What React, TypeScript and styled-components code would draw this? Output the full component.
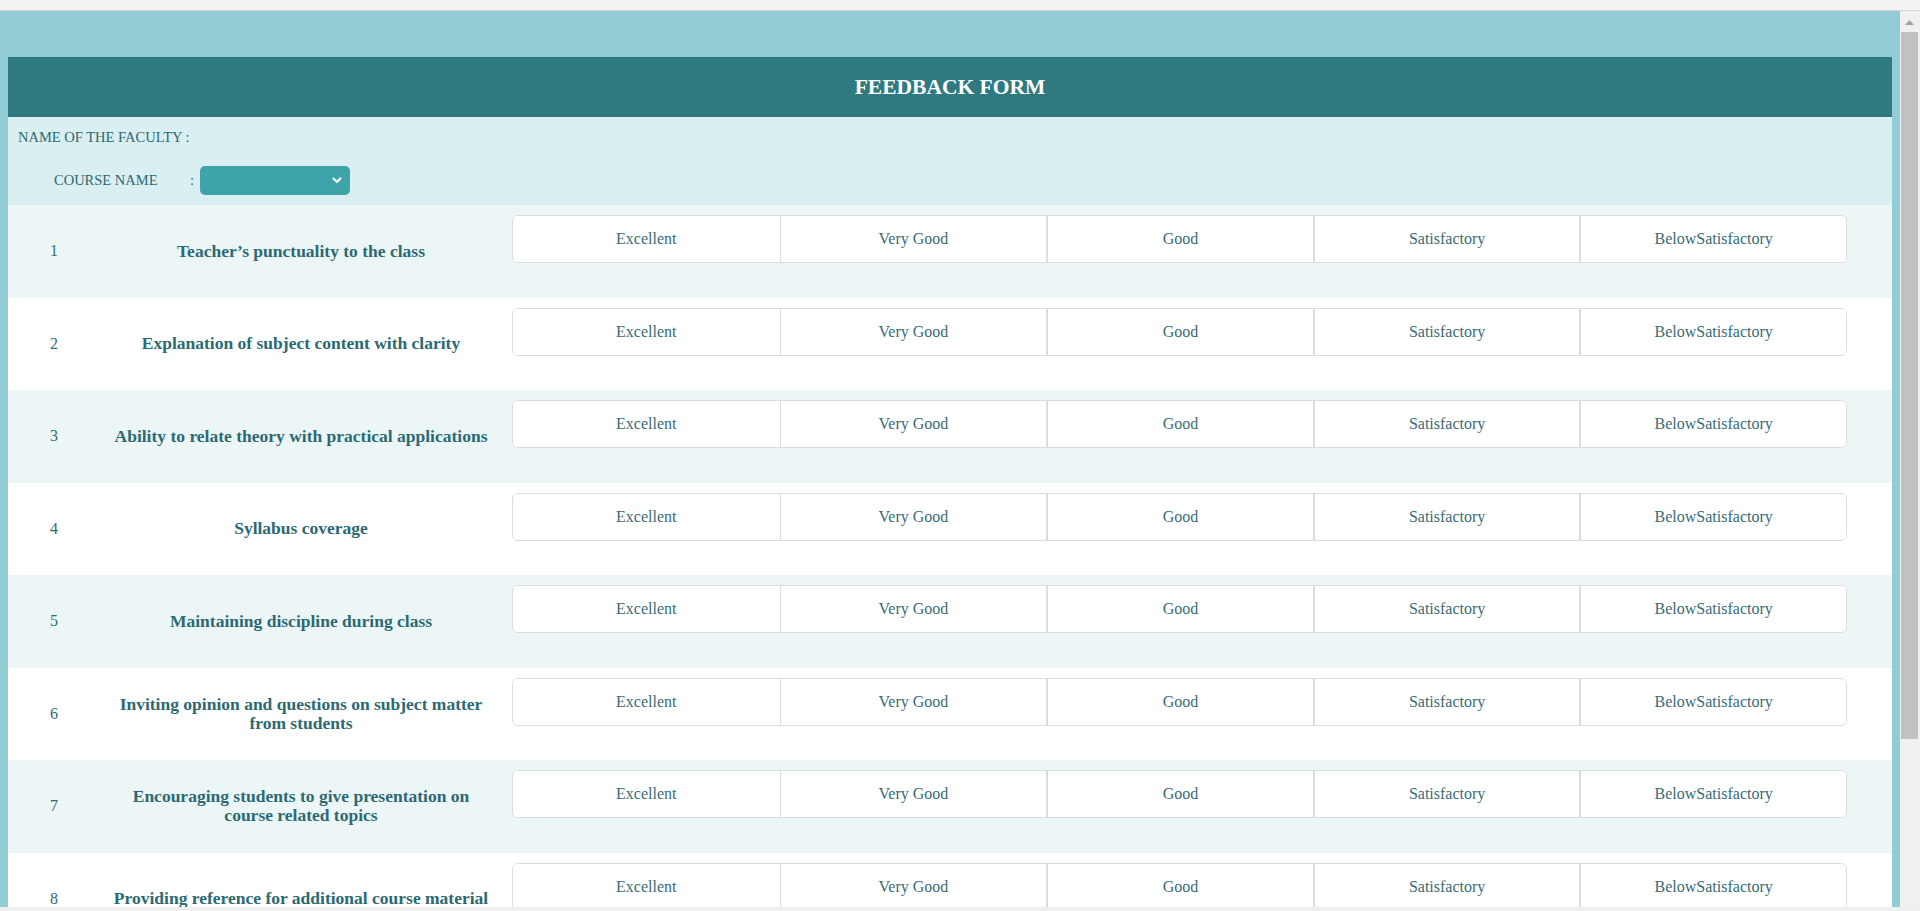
import React, { useState } from "react";
import styled, { createGlobalStyle } from "styled-components";

const GlobalStyle = createGlobalStyle`
   html, body {
      margin: 0;
      padding: 0;
      height: 100%;
      overflow: hidden;
   }
   body {
      font-family: "Liberation Serif", "Times New Roman", serif;
      background: #f1f1f1;
   }
`;

const questions = [
   "Teacher’s punctuality to the class",
   "Explanation of subject content with clarity",
   "Ability to relate theory with practical applications",
   "Syllabus coverage",
   "Maintaining discipline during class",
   "Inviting opinion and questions on subject matter from students",
   "Encouraging students to give presentation on course related topics",
   "Providing reference for additional course material",
   "Overall rating of the teacher",
];

const ratings = ["Excellent", "Very Good", "Good", "Satisfactory", "BelowSatisfactory"];

function FeedbackForm() {
   const [answers, setAnswers] = useState<Record<number, string>>({});
   const [course, setCourse] = useState("");

   return (
      <Frame>
         <GlobalStyle />
         <TopStrip />
         <Viewport>
            <Scroller>
               <Page>
                  <Card>
                     <Header>FEEDBACK FORM</Header>
                     <Info>
                        <InfoLine>NAME OF THE FACULTY :</InfoLine>
                        <CourseLine>
                           <CourseLabel>COURSE NAME</CourseLabel>
                           <Colon>:</Colon>
                           <SelectWrap>
                              <CourseSelect value={course} onChange={(e) => setCourse(e.target.value)}>
                                 <option value=""></option>
                              </CourseSelect>
                              <Chevron width="10" height="7" viewBox="0 0 10 7">
                                 <polyline points="1.5,1.5 5,5 8.5,1.5" fill="none" stroke="#fff" strokeWidth="2" strokeLinecap="round" strokeLinejoin="round" />
                              </Chevron>
                           </SelectWrap>
                        </CourseLine>
                     </Info>
                     {questions.map((q, index) => (
                        <Row key={index} $odd={index % 2 == 0}>
                           <Num>{index + 1}</Num>
                           <QuestionCell>
                              <Question>{q}</Question>
                           </QuestionCell>
                           <Choices>
                              {ratings.map((r, i) => (
                                 <Choice
                                    key={r}
                                    $divider={i == 0 ? 0 : i == 1 ? 1 : 2}
                                    $picked={answers[index] == r}
                                    onClick={() => setAnswers({ ...answers, [index]: r })}
                                 >
                                    {r}
                                 </Choice>
                              ))}
                           </Choices>
                        </Row>
                     ))}
                  </Card>
               </Page>
            </Scroller>
            <ScrollRail>
               <ScrollArrow width="20" height="20" viewBox="0 0 20 20">
                  <polygon points="5,14 14,14 9.5,9" fill="#a3a3a3" />
               </ScrollArrow>
               <ScrollThumb />
            </ScrollRail>
         </Viewport>
         <BottomStrip />
      </Frame>
   );
}

export default function App() {
   return <FeedbackForm />;
}

const Frame = styled.div`
   height: 100vh;
   display: flex;
   flex-direction: column;
`;

const TopStrip = styled.div`
   height: 10px;
   flex: none;
   background: #f3f3f3;
   border-bottom: 1px solid #d6d6d6;
`;

const BottomStrip = styled.div`
   height: 4px;
   flex: none;
   background: #efefef;
`;

const Viewport = styled.div`
   flex: 1;
   min-height: 0;
   display: flex;
`;

const Scroller = styled.div`
   flex: 1;
   min-width: 0;
   overflow-y: auto;
   scrollbar-width: none;
   background: #92ccd4;
   &::-webkit-scrollbar {
      display: none;
   }
`;

const ScrollRail = styled.div`
   width: 20px;
   flex: none;
   display: flex;
   flex-direction: column;
   background: #f0f0f0;
`;

const ScrollArrow = styled.svg`
   display: block;
   flex: none;
`;

const ScrollThumb = styled.div`
   margin: 1px 2px 0 1px;
   height: 707px;
   background: #c1c1c1;
`;

const Page = styled.div`
   padding: 46px 8px 40px 8px;
`;

const Card = styled.div`
   background: #ffffff;
`;

const Header = styled.div`
   height: 60px;
   display: flex;
   align-items: center;
   justify-content: center;
   background: #2f7a80;
   color: #ffffff;
   font-size: 21.5px;
   font-weight: bold;
`;

const Info = styled.div`
   background: #daeff2;
   padding: 10px 10px 10px 10px;
   color: #2d6870;
   font-size: 14.5px;
`;

const InfoLine = styled.div`
   height: 20px;
   line-height: 20px;
`;

const CourseLine = styled.div`
   margin-top: 19px;
   height: 29px;
   display: flex;
   align-items: center;
   padding-left: 36px;
`;

const CourseLabel = styled.span`
   width: 136px;
`;

const Colon = styled.span`
   width: 10px;
`;

const SelectWrap = styled.div`
   position: relative;
   width: 150px;
   height: 29px;
`;

const CourseSelect = styled.select`
   appearance: none;
   width: 100%;
   height: 100%;
   border: none;
   border-radius: 5px;
   background: #3fa3aa;
   color: #ffffff;
   font-family: inherit;
   font-size: 14px;
   outline: none;
   cursor: pointer;
`;

const Chevron = styled.svg`
   position: absolute;
   right: 8px;
   top: 11px;
   pointer-events: none;
`;

const Row = styled.div<{ $odd: boolean }>`
   min-height: 92.5px;
   display: grid;
   grid-template-columns: 92px 402px 1fr;
   padding-right: 45px;
   background: ${(p) => (p.$odd ? "#edf6f7" : "#ffffff")};
   box-sizing: border-box;
`;

const Num = styled.div`
   align-self: center;
   text-align: center;
   color: #2f6c74;
   font-size: 16px;
`;

const QuestionCell = styled.div`
   align-self: center;
   display: flex;
   justify-content: center;
`;

const Question = styled.div`
   max-width: 383px;
   text-align: center;
   color: #2b6a72;
   font-size: 17.5px;
   font-weight: bold;
   line-height: 19px;
`;

const Choices = styled.div`
   align-self: start;
   margin: 10px 0 0 10px;
   height: 48px;
   box-sizing: border-box;
   display: grid;
   grid-template-columns: repeat(5, 1fr);
   background: #ffffff;
   border: 1px solid #dcdcdc;
   border-radius: 6px;
   overflow: hidden;
`;

const Choice = styled.div<{ $divider: number; $picked: boolean }>`
   display: flex;
   align-items: center;
   justify-content: center;
   border-left: ${(p) => p.$divider}px solid #dcdcdc;
   background: ${(p) => (p.$picked ? "#3fa3aa" : "#ffffff")};
   color: ${(p) => (p.$picked ? "#ffffff" : "#3a6c74")};
   font-size: 16px;
   cursor: pointer;
`;
